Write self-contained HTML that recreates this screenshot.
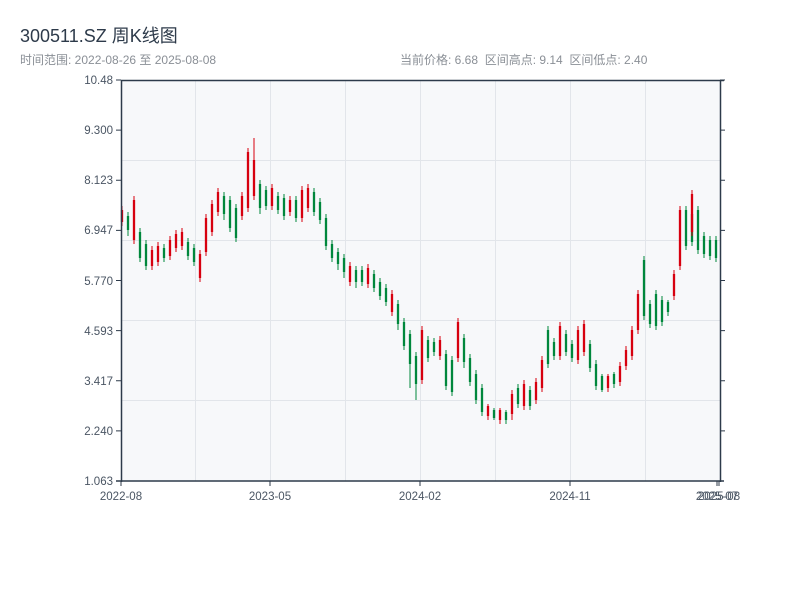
<!DOCTYPE html>
<html><head><meta charset="utf-8"><style>
body{margin:0;background:#fff;width:800px;height:600px;overflow:hidden;font-family:"Liberation Sans","Noto Sans CJK SC",sans-serif;}
.t{position:absolute;left:20px;top:22px;font-size:18px;color:#2d3a4a;}
.s{position:absolute;top:51px;font-size:12px;color:#8a8f96;}
svg{position:absolute;left:0;top:0;}
text{font-family:"Liberation Sans",sans-serif;font-size:11.5px;fill:#4a5563;}
</style></head><body>
<div class="t">300511.SZ 周K线图</div>
<div class="s" style="left:20px">时间范围: 2022-08-26 至 2025-08-08</div>
<div class="s" style="left:400px">当前价格: 6.68&nbsp; 区间高点: 9.14&nbsp; 区间低点: 2.40</div>
<svg width="800" height="600" xmlns="http://www.w3.org/2000/svg">
<rect x="121" y="80" width="599" height="401" fill="#f7f8fa"/>
<g stroke="#e2e5ea" stroke-width="1">
<line x1="195.5" y1="80" x2="195.5" y2="481"/><line x1="270.5" y1="80" x2="270.5" y2="481"/><line x1="345.5" y1="80" x2="345.5" y2="481"/><line x1="420.5" y1="80" x2="420.5" y2="481"/><line x1="495.5" y1="80" x2="495.5" y2="481"/><line x1="570.5" y1="80" x2="570.5" y2="481"/><line x1="645.5" y1="80" x2="645.5" y2="481"/>
<line x1="121" y1="160.5" x2="720" y2="160.5"/><line x1="121" y1="240.5" x2="720" y2="240.5"/><line x1="121" y1="320.5" x2="720" y2="320.5"/><line x1="121" y1="400.5" x2="720" y2="400.5"/>
</g>
<!-- green candles -->
<path fill="none" stroke="#00873c" stroke-width="1" d="M128 212V236M140 228V262M146 240V270M164 244V262M188 238V260M194 244V266M224 192V220M230 196V232M236 204V242M260 180V214M266 186V210M278 192V214M284 194V220M296 196V222M314 188V216M320 198V224M326 214V250M332 240V262M338 248V270M344 254V278M356 266V288M362 266V286M374 270V292M380 278V300M386 284V306M398 300V330M404 318V350M410 330V388M416 352V400M428 336V362M434 338V356M446 350V390M452 356V396M464 334V368M470 354V386M476 370V404M482 384V416M494 408V420M506 410V424M518 384V408M530 386V410M548 326V368M554 338V360M566 330V356M572 340V362M590 340V372M596 360V390M602 374V392M614 372V388M644 256V320M650 300V328M656 290V330M662 296V326M668 300V316M686 206V250M692 210V246M698 206V254M704 232V258M710 236V260M716 236V262"/>
<path fill="none" stroke="#00873c" stroke-width="2.3" d="M128 216V230M140 232V258M146 244V266M164 248V258M188 242V256M194 248V262M224 196V214M230 200V228M236 208V238M260 184V208M266 190V206M278 196V210M284 198V216M296 200V218M314 192V212M320 202V220M326 218V246M332 244V258M338 252V264M344 258V272M356 270V282M362 270V282M374 274V288M380 282V296M386 288V302M398 304V324M404 322V346M410 334V364M416 356V384M428 340V358M434 342V352M446 354V386M452 360V392M464 338V362M470 358V382M476 374V400M482 388V412M494 410V418M506 412V420M518 388V404M530 390V406M548 330V364M554 342V356M566 334V352M572 344V358M590 344V368M596 364V386M602 376V390M614 374V384M644 260V316M650 304V324M656 294V326M662 300V322M668 302V312M686 210V246M692 214V242M698 210V250M704 236V254M710 240V256M716 240V258"/>
<!-- red candles -->
<path fill="none" stroke="#d7000f" stroke-width="1" d="M122 206V226M134 196V244M152 246V270M158 242V266M170 236V260M176 230V252M182 228V250M200 250V282M206 214V256M212 200V236M218 188V216M242 192V220M248 148V212M254 138V200M272 184V210M290 196V216M302 186V222M308 184V212M350 262V286M368 264V288M392 290V316M422 326V384M440 336V360M458 318V362M488 404V420M500 408V424M512 390V420M524 380V410M536 378V404M542 356V392M560 322V360M578 326V364M584 320V356M608 374V392M620 362V386M626 346V370M632 326V360M638 290V334M674 270V300M680 206V270M692 190V236"/>
<path fill="none" stroke="#d7000f" stroke-width="2.3" d="M122 210V222M134 200V240M152 250V266M158 246V262M170 240V256M176 234V248M182 232V246M200 254V278M206 218V252M212 204V232M218 192V212M242 196V216M248 152V208M254 160V196M272 188V206M290 200V212M302 190V218M308 188V208M350 266V282M368 268V284M392 294V312M422 330V380M440 340V356M458 322V358M488 406V416M500 410V420M512 394V414M524 384V406M536 382V400M542 360V388M560 326V356M578 330V360M584 324V352M608 376V388M620 366V382M626 350V366M632 330V356M638 294V330M674 274V296M680 210V266M692 194V232"/>
<g stroke="#2d3a4a" stroke-width="1.5" fill="none">
<line x1="121" y1="80.5" x2="724" y2="80.5"/><line x1="121.5" y1="80" x2="121.5" y2="482"/><line x1="720.5" y1="80" x2="720.5" y2="482"/><line x1="116" y1="481" x2="724" y2="481"/>
</g>
<g stroke="#2d3a4a" stroke-width="1">
<path d="M116 80H121M720 80H725M116 130.1H121M720 130.1H725M116 180.3H121M720 180.3H725M116 230.4H121M720 230.4H725M116 280.5H121M720 280.5H725M116 330.6H121M720 330.6H725M116 380.8H121M720 380.8H725M116 430.9H121M720 430.9H725M121 481V486M270 481V486M420 481V486M570 481V486M717 481V486M719 481V486"/>
</g>
<text x="113" y="84" text-anchor="end">10.48</text>
<text x="113" y="134" text-anchor="end">9.300</text>
<text x="113" y="184" text-anchor="end">8.123</text>
<text x="113" y="234" text-anchor="end">6.947</text>
<text x="113" y="285" text-anchor="end">5.770</text>
<text x="113" y="335" text-anchor="end">4.593</text>
<text x="113" y="385" text-anchor="end">3.417</text>
<text x="113" y="435" text-anchor="end">2.240</text>
<text x="113" y="485" text-anchor="end">1.063</text>
<text x="121" y="500" text-anchor="middle">2022-08</text>
<text x="270" y="500" text-anchor="middle">2023-05</text>
<text x="420" y="500" text-anchor="middle">2024-02</text>
<text x="570" y="500" text-anchor="middle">2024-11</text>
<text x="717" y="500" text-anchor="middle">2025-07</text>
<text x="719" y="500" text-anchor="middle">2025-08</text>
</svg>
</body></html>
